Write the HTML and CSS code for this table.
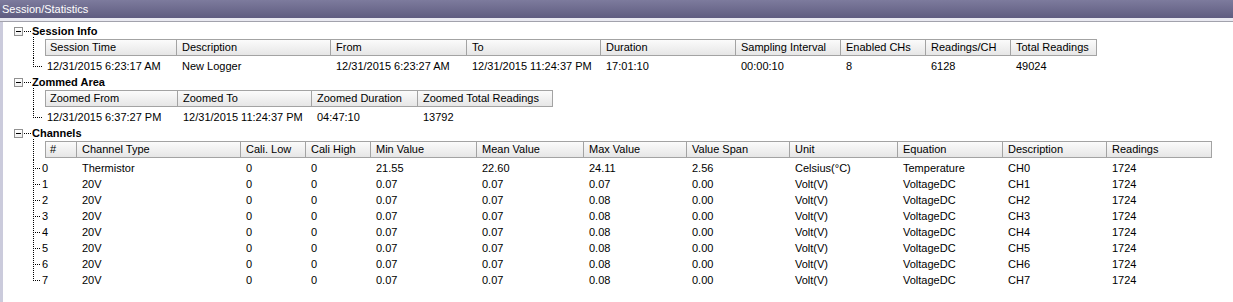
FILE: index.html
```html
<!DOCTYPE html>
<html>
<head>
<meta charset="utf-8">
<link rel="stylesheet" href="styles.css">
</head>
<body>
<div class="app">
  <div class="titlebar">Session/Statistics</div>
  <div class="strip"></div>
  <div class="panel">

    <div class="node">
      <div class="node-label"><span class="expander"><span class="minus"></span></span><span class="hconn"></span><span class="label-text">Session Info</span></div>
      <div class="node-body">
        <div class="row hdr-row">
          <div class="gutter g-full"></div>
          <div class="lv-header cols-session">
            <div class="hc first">Session Time</div><div class="hc">Description</div><div class="hc">From</div><div class="hc">To</div><div class="hc">Duration</div><div class="hc">Sampling Interval</div><div class="hc">Enabled CHs</div><div class="hc">Readings/CH</div><div class="hc">Total Readings</div>
          </div>
        </div>
        <div class="row data-row">
          <div class="gutter g-last"></div>
          <div class="lv-row cols-session">
            <div class="dc first">12/31/2015 6:23:17 AM</div><div class="dc">New Logger</div><div class="dc">12/31/2015 6:23:27 AM</div><div class="dc">12/31/2015 11:24:37 PM</div><div class="dc">17:01:10</div><div class="dc">00:00:10</div><div class="dc">8</div><div class="dc">6128</div><div class="dc">49024</div>
          </div>
        </div>
      </div>
    </div>

    <div class="node">
      <div class="node-label"><span class="expander"><span class="minus"></span></span><span class="hconn"></span><span class="label-text">Zommed Area</span></div>
      <div class="node-body">
        <div class="row hdr-row">
          <div class="gutter g-full"></div>
          <div class="lv-header cols-zoom">
            <div class="hc first">Zoomed From</div><div class="hc">Zoomed To</div><div class="hc">Zoomed Duration</div><div class="hc">Zoomed Total Readings</div>
          </div>
        </div>
        <div class="row data-row">
          <div class="gutter g-last"></div>
          <div class="lv-row cols-zoom">
            <div class="dc first">12/31/2015 6:37:27 PM</div><div class="dc">12/31/2015 11:24:37 PM</div><div class="dc">04:47:10</div><div class="dc">13792</div>
          </div>
        </div>
      </div>
    </div>

    <div class="node">
      <div class="node-label"><span class="expander"><span class="minus"></span></span><span class="hconn"></span><span class="label-text">Channels</span></div>
      <div class="node-body channels">
        <div class="row hdr-row">
          <div class="gutter g-full"></div>
          <div class="lv-header cols-ch">
            <div class="hc first">#</div><div class="hc">Channel Type</div><div class="hc">Cali. Low</div><div class="hc">Cali High</div><div class="hc">Min Value</div><div class="hc">Mean Value</div><div class="hc">Max Value</div><div class="hc">Value Span</div><div class="hc">Unit</div><div class="hc">Equation</div><div class="hc">Description</div><div class="hc">Readings</div>
          </div>
        </div>
        <div class="row data-row">
          <div class="gutter g-branch"></div>
          <div class="lv-row cols-ch">
            <div class="dc first">0</div><div class="dc">Thermistor</div><div class="dc">0</div><div class="dc">0</div><div class="dc">21.55</div><div class="dc">22.60</div><div class="dc">24.11</div><div class="dc">2.56</div><div class="dc">Celsius(°C)</div><div class="dc">Temperature</div><div class="dc">CH0</div><div class="dc">1724</div>
          </div>
        </div>
        <div class="row data-row">
          <div class="gutter g-branch"></div>
          <div class="lv-row cols-ch">
            <div class="dc first">1</div><div class="dc">20V</div><div class="dc">0</div><div class="dc">0</div><div class="dc">0.07</div><div class="dc">0.07</div><div class="dc">0.07</div><div class="dc">0.00</div><div class="dc">Volt(V)</div><div class="dc">VoltageDC</div><div class="dc">CH1</div><div class="dc">1724</div>
          </div>
        </div>
        <div class="row data-row">
          <div class="gutter g-branch"></div>
          <div class="lv-row cols-ch">
            <div class="dc first">2</div><div class="dc">20V</div><div class="dc">0</div><div class="dc">0</div><div class="dc">0.07</div><div class="dc">0.07</div><div class="dc">0.08</div><div class="dc">0.00</div><div class="dc">Volt(V)</div><div class="dc">VoltageDC</div><div class="dc">CH2</div><div class="dc">1724</div>
          </div>
        </div>
        <div class="row data-row">
          <div class="gutter g-branch"></div>
          <div class="lv-row cols-ch">
            <div class="dc first">3</div><div class="dc">20V</div><div class="dc">0</div><div class="dc">0</div><div class="dc">0.07</div><div class="dc">0.07</div><div class="dc">0.08</div><div class="dc">0.00</div><div class="dc">Volt(V)</div><div class="dc">VoltageDC</div><div class="dc">CH3</div><div class="dc">1724</div>
          </div>
        </div>
        <div class="row data-row">
          <div class="gutter g-branch"></div>
          <div class="lv-row cols-ch">
            <div class="dc first">4</div><div class="dc">20V</div><div class="dc">0</div><div class="dc">0</div><div class="dc">0.07</div><div class="dc">0.07</div><div class="dc">0.08</div><div class="dc">0.00</div><div class="dc">Volt(V)</div><div class="dc">VoltageDC</div><div class="dc">CH4</div><div class="dc">1724</div>
          </div>
        </div>
        <div class="row data-row">
          <div class="gutter g-branch"></div>
          <div class="lv-row cols-ch">
            <div class="dc first">5</div><div class="dc">20V</div><div class="dc">0</div><div class="dc">0</div><div class="dc">0.07</div><div class="dc">0.07</div><div class="dc">0.08</div><div class="dc">0.00</div><div class="dc">Volt(V)</div><div class="dc">VoltageDC</div><div class="dc">CH5</div><div class="dc">1724</div>
          </div>
        </div>
        <div class="row data-row">
          <div class="gutter g-branch"></div>
          <div class="lv-row cols-ch">
            <div class="dc first">6</div><div class="dc">20V</div><div class="dc">0</div><div class="dc">0</div><div class="dc">0.07</div><div class="dc">0.07</div><div class="dc">0.08</div><div class="dc">0.00</div><div class="dc">Volt(V)</div><div class="dc">VoltageDC</div><div class="dc">CH6</div><div class="dc">1724</div>
          </div>
        </div>
        <div class="row data-row">
          <div class="gutter g-last"></div>
          <div class="lv-row cols-ch">
            <div class="dc first">7</div><div class="dc">20V</div><div class="dc">0</div><div class="dc">0</div><div class="dc">0.07</div><div class="dc">0.07</div><div class="dc">0.08</div><div class="dc">0.00</div><div class="dc">Volt(V)</div><div class="dc">VoltageDC</div><div class="dc">CH7</div><div class="dc">1724</div>
          </div>
        </div>
      </div>
    </div>

  </div>
</div>
</body>
</html>
```
FILE: styles.css
```css
html, body {
  margin: 0;
  padding: 0;
  background: #ffffff;
}
body {
  width: 1233px;
  height: 302px;
  overflow: hidden;
  font-family: "Liberation Sans", Arial, sans-serif;
  font-size: 11px;
  color: #000;
}
.app {
  display: flex;
  flex-direction: column;
  height: 302px;
}
.titlebar {
  height: 18px;
  line-height: 18px;
  padding-left: 2px;
  color: #ffffff;
  background: linear-gradient(#7d7b9d, #5f5c80);
  font-size: 11px;
}
.strip {
  height: 3px;
  background: #e9e9f1;
  border-bottom: 1px solid #a2a2ac;
}
.panel {
  flex: 1;
  border-left: 3px solid #cbcbdc;
  padding: 1px 0 0 11px;
}

/* tree node label */
.node-label {
  display: flex;
  align-items: flex-start;
  height: 16px;
  background: repeating-linear-gradient(to bottom, #000 0 1px, transparent 1px 2px) 19px 14px / 1px 2px no-repeat;
}
.expander {
  box-sizing: border-box;
  width: 9px;
  height: 9px;
  margin-top: 4px;
  border: 1px solid #919191;
  background: linear-gradient(#ffffff, #f0f0f0);
  display: flex;
  align-items: center;
  justify-content: center;
}
.minus {
  width: 5px;
  height: 1px;
  background: #000;
}
.hconn {
  width: 7px;
  height: 1px;
  margin: 8px 1px 0 1px;
  background: repeating-linear-gradient(to right, #000 0 1px, transparent 1px 2px);
}
.label-text {
  font-weight: bold;
  line-height: 16px;
}

/* tree body */
.node-body {
  margin-left: 19px;
  display: flex;
  flex-direction: column;
}
.row {
  display: flex;
}
.hdr-row {
  height: 19px;
  align-items: flex-start;
}
.data-row {
  height: 16px;
}
.gutter {
  width: 12px;
  align-self: stretch;
  flex: none;
}
.g-full {
  background: repeating-linear-gradient(to bottom, #000 0 1px, transparent 1px 2px) 0 0 / 1px 100% no-repeat;
}
.g-branch {
  background:
    repeating-linear-gradient(to bottom, #000 0 1px, transparent 1px 2px) 0 0 / 1px 100% no-repeat,
    repeating-linear-gradient(to right, #000 0 1px, transparent 1px 2px) 0 8px / 10px 1px no-repeat;
}
.g-last {
  background:
    repeating-linear-gradient(to bottom, #000 0 1px, transparent 1px 2px) 0 0 / 1px 9px no-repeat,
    repeating-linear-gradient(to right, #000 0 1px, transparent 1px 2px) 0 8px / 10px 1px no-repeat;
}
.channels .g-branch,
.channels .g-last {
  background-size: 1px 100%, 7px 1px;
}
.channels .g-last {
  background-size: 1px 9px, 7px 1px;
}

/* list view */
.lv-header {
  display: grid;
  height: 17px;
  box-sizing: border-box;
  border: 1px solid #a3a3a3;
  border-right: none;
  background: linear-gradient(#fbfbfb, #e6e6e6);
}
.lv-row {
  display: grid;
  padding-left: 1px;
  height: 16px;
}
.cols-session {
  grid-template-columns: 131px 154px 136px 134px 135px 105px 85px 85px 86px;
}
.cols-zoom {
  grid-template-columns: 132px 134px 106px 135px;
}
.cols-ch {
  grid-template-columns: 31px 164px 65px 65px 106px 107px 103px 103px 108px 105px 104px 105px;
}
.hc {
  box-sizing: border-box;
  border-right: 1px solid #a3a3a3;
  padding-left: 5px;
  line-height: 15px;
  white-space: nowrap;
  overflow: hidden;
}
.hc.first {
  padding-left: 4px;
}
.dc {
  padding-left: 5px;
  line-height: 16px;
  white-space: nowrap;
}
.dc.first {
  padding-left: 1px;
}
.channels .dc.first {
  padding-left: 0;
  text-indent: -4px;
}
```
